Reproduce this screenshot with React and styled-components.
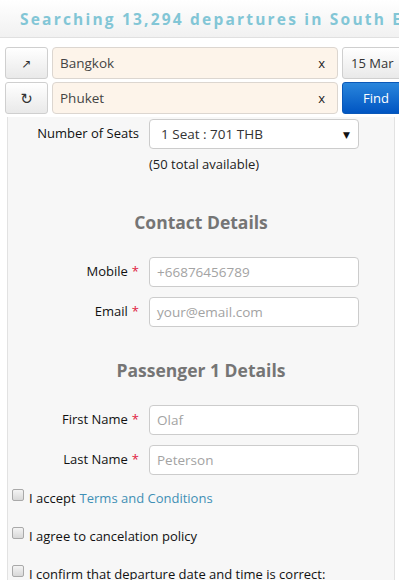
import styled, { createGlobalStyle } from "styled-components";

const GlobalStyle = createGlobalStyle`
  html, body {
    margin: 0;
    padding: 0;
    background: #ffffff;
    font-family: "Open Sans", "DejaVu Sans", sans-serif;
    overflow: hidden;
  }
`;

const Page = styled.div`
  width: 399px;
  height: 580px;
  overflow: hidden;
`;

const Header = styled.div`
  height: 37px;
  background: linear-gradient(#ffffff, #f1f1f1);
  border-bottom: 1px solid #e0e0e0;
  display: flex;
  align-items: center;
  padding-left: 20px;
  white-space: nowrap;
  overflow: hidden;
`;

const Title = styled.h1`
  margin: 0;
  font-size: 15.5px;
  font-weight: 700;
  letter-spacing: 2.2px;
  color: #82c6d6;
`;

const SearchForm = styled.div`
  display: grid;
  grid-template-columns: 43px 286px 70px;
  grid-auto-rows: 32px;
  column-gap: 4px;
  row-gap: 3px;
  padding: 9px 0 3px 5px;
  overflow: hidden;
`;

const Button = styled.button`
  border: 1px solid ${(p) => (p.primary ? "#0a58b8" : "#cfcfcf")};
  border-radius: 3px;
  background: ${(p) =>
    p.primary
      ? "linear-gradient(#2a86dc, #0055c2)"
      : "linear-gradient(#ffffff, #e9e9e9)"};
  color: ${(p) => (p.primary ? "#ffffff" : "#333333")};
  font-family: "Open Sans", "DejaVu Sans", sans-serif;
  font-size: ${(p) => (p.icon ? "12px" : "13px")};
  text-align: ${(p) => (p.icon ? "center" : "left")};
  padding: ${(p) => (p.icon ? "0" : p.primary ? "0 0 0 20px" : "0 0 0 8px")};
  white-space: nowrap;
`;

const PlaceInput = styled.div`
  display: flex;
  align-items: center;
  justify-content: space-between;
  padding: 0 12px 0 7px;
  border: 1px solid #dcd6d0;
  border-radius: 4px;
  background: #fdf4ea;
  font-size: 13.5px;
  color: #444;
`;

const Clear = styled.span`
  font-size: 13px;
  color: #222;
`;

const Panel = styled.div`
  margin: 0 4px 0 7px;
  border-left: 1px solid #e2e2e2;
  border-right: 1px solid #e2e2e2;
  background: #f7f7f7;
  padding: 2px 0 0;
  height: 461px;
`;

const Row = styled.div`
  display: grid;
  grid-template-columns: 131px 210px;
  column-gap: 10px;
  margin-top: ${(p) => p.top || 0}px;
`;

const Label = styled.label`
  text-align: right;
  font-size: 13px;
  color: #111;
  padding-top: ${(p) => p.pt || 4}px;
  line-height: 18px;
`;

const Star = styled.span`
  color: #e0213f;
  margin-left: 4px;
`;

const Field = styled.div`
  height: 28px;
  border: 1px solid #cccccc;
  border-radius: 4px;
  background: #ffffff;
  display: flex;
  align-items: center;
  justify-content: space-between;
  padding: 0 8px 0 ${(p) => (p.select ? 11 : 7)}px;
  font-size: 13.5px;
  color: ${(p) => (p.select ? "#333" : "#a3a3a3")};
`;

const Caret = styled.span`
  font-size: 9px;
  color: #111;
`;

const Help = styled.div`
  margin: 6px 0 0 141px;
  font-size: 13px;
  line-height: 18px;
  color: #222;
`;

const Heading = styled.h2`
  margin: ${(p) => p.top}px 0 0;
  text-align: center;
  font-size: 17.5px;
  line-height: 24px;
  font-weight: 700;
  color: #757575;
`;

const Check = styled.label`
  display: flex;
  align-items: center;
  margin-top: ${(p) => p.top}px;
  padding-left: 4px;
  height: 22px;
  font-size: 13px;
  color: #111;
  white-space: nowrap;
`;

const Box = styled.span`
  width: 10px;
  height: 10px;
  border: 1px solid #a9a9a9;
  border-radius: 2px;
  background: linear-gradient(#f4f4f4, #d8d8d8);
  margin: -6px 5px 0 0;
  flex: none;
`;

const Link = styled.span`
  color: #3f8fb5;
  margin-left: 4px;
`;

function FormRow({ label, top, children }) {
  return (
    <Row top={top}>
      <Label pt={5}>
        {label}
        <Star>*</Star>
      </Label>
      <Field>{children}</Field>
    </Row>
  );
}

export default function App() {
  return (
    <Page>
      <GlobalStyle />
      <Header>
        <Title>Searching 13,294 departures in South East Asia</Title>
      </Header>

      <SearchForm>
        <Button icon>↗</Button>
        <PlaceInput>
          Bangkok <Clear>x</Clear>
        </PlaceInput>
        <Button>15 Mar</Button>
        <Button icon style={{ fontSize: 15 }}>↻</Button>
        <PlaceInput>
          Phuket <Clear>x</Clear>
        </PlaceInput>
        <Button primary>Find</Button>
      </SearchForm>

      <Panel>
        <Row>
          <Label pt={5}>Number of Seats</Label>
          <Field select>
            1 Seat : 701 THB <Caret>▼</Caret>
          </Field>
        </Row>
        <Help>(50 total available)</Help>

        <Heading top={37}>Contact Details</Heading>
        <FormRow label="Mobile" top={23}>+66876456789</FormRow>
        <FormRow label="Email" top={10}>your@email.com</FormRow>

        <Heading top={31}>Passenger 1 Details</Heading>
        <FormRow label="First Name" top={23}>Olaf</FormRow>
        <FormRow label="Last Name" top={10}>Peterson</FormRow>

        <Check top={12}>
          <Box />I accept<Link>Terms and Conditions</Link>
        </Check>
        <Check top={16}>
          <Box />I agree to cancelation policy
        </Check>
        <Check top={16}>
          <Box />I confirm that departure date and time is correct:
        </Check>
      </Panel>
    </Page>
  );
}
